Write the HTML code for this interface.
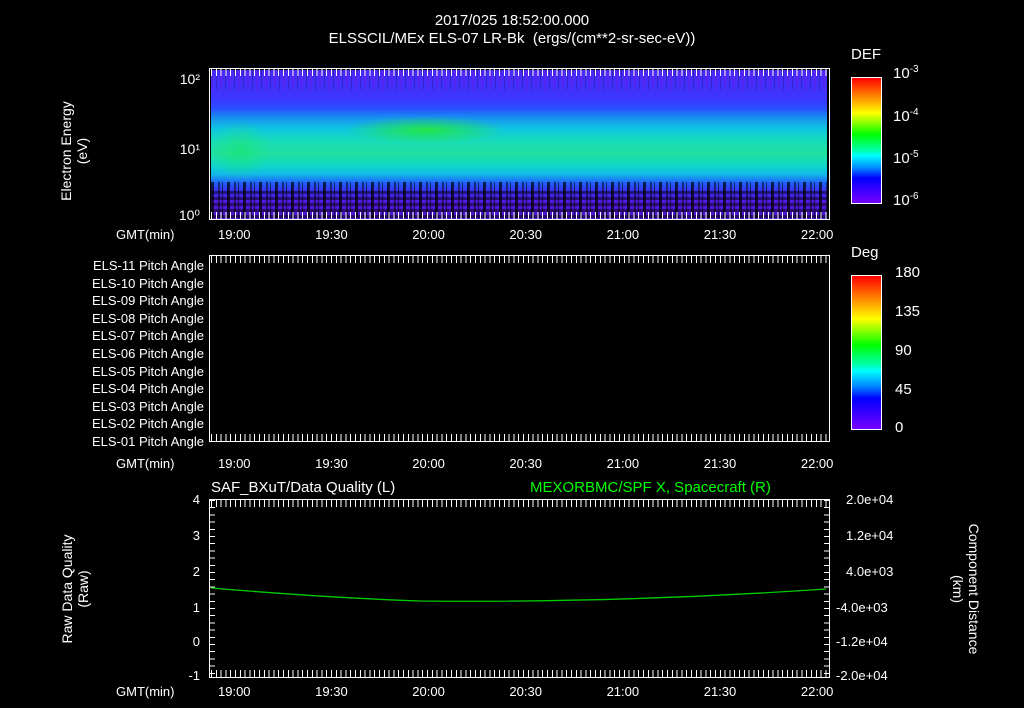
<!DOCTYPE html>
<html><head><meta charset="utf-8"><style>
body{margin:0;width:1024px;height:708px;background:#000;position:relative;overflow:hidden;font-family:"Liberation Sans",sans-serif;color:#fff;font-size:13px}
.a{position:absolute;white-space:nowrap}
.box{position:absolute;border:1px solid #fff;box-sizing:border-box}
.tk{position:absolute;height:7px;background:repeating-linear-gradient(90deg,#fff 0 1px,transparent 1px 4.8px)}
.vt{position:absolute;width:5px;background:repeating-linear-gradient(180deg,#fff 0 1px,transparent 1px 7.2px)}
.r{text-align:right}
.rot{transform:rotate(-90deg);transform-origin:center;text-align:center;line-height:16px}
</style></head><body>
<div class="a" style="left:0;width:1024px;top:12px;text-align:center;font-size:15px;line-height:18px">2017/025 18:52:00.000<br>ELSSCIL/MEx ELS-07 LR-Bk&nbsp; (ergs/(cm**2-sr-sec-eV))</div>

<!-- panel 1 -->
<div class="a" style="left:211px;top:70px;width:616px;height:149px;background:
radial-gradient(ellipse 80px 14px at 215px 60px,rgba(40,240,20,.75),transparent),
radial-gradient(ellipse 30px 30px at 30px 80px,rgba(30,230,90,.5),transparent),
linear-gradient(180deg,#4a28f8 0,#3a38ff 20%,#2850ff 26%,#1890f0 32%,#10c8e0 40%,#18dcb8 48%,#20e0a0 56%,#10d8c8 64%,#12b8e8 70%,#2060f8 76%,#3a30f0 81%,#5018e0 88%,#4a14c8 100%)"></div>
<div class="a" style="left:211px;top:182px;width:616px;height:36px;background:repeating-linear-gradient(90deg,rgba(0,0,0,.7) 0 3px,transparent 3px 7px,rgba(0,0,0,.5) 7px 9px,transparent 9px 11px,rgba(0,0,0,.6) 11px 12px,transparent 12px 16px);"></div>
<div class="a" style="left:211px;top:190px;width:616px;height:28px;background:repeating-linear-gradient(0deg,rgba(0,0,0,.45) 0 3px,transparent 3px 6px);"></div>
<div class="a" style="left:211px;top:70px;width:616px;height:20px;background:repeating-linear-gradient(90deg,rgba(120,20,220,.35) 0 2px,transparent 2px 5px,rgba(0,0,0,.2) 5px 6px,transparent 6px 9px)"></div>
<div class="box" style="left:209px;top:68px;width:621px;height:152px"></div>
<div class="tk" style="left:211px;top:69px;width:617px"></div>
<div class="tk" style="left:211px;top:212px;width:617px"></div>
<div class="a r" style="left:155px;width:45px;top:71px;font-size:14px">10²</div>
<div class="a r" style="left:155px;width:45px;top:141px;font-size:14px">10¹</div>
<div class="a r" style="left:155px;width:45px;top:207px;font-size:14px">10⁰</div>
<div class="a rot" style="left:10px;top:134px;width:130px;height:34px;font-size:14px">Electron Energy<br>(eV)</div>

<!-- colorbars -->
<div class="a" style="left:851px;top:46px;font-size:15px">DEF</div>
<div class="a" style="left:851px;top:77px;width:31px;height:127px;border:1px solid #fff;box-sizing:border-box;background:linear-gradient(180deg,#f00,#f80 15%,#ff0 28%,#8f0 36%,#0f0 45%,#0fa 58%,#0ff 62%,#08f 72%,#00f 80%,#70f 100%)"></div>
<div class="a" style="left:893px;top:64px;font-size:15px">10<sup style="font-size:10px">-3</sup></div>
<div class="a" style="left:893px;top:107px;font-size:15px">10<sup style="font-size:10px">-4</sup></div>
<div class="a" style="left:893px;top:149px;font-size:15px">10<sup style="font-size:10px">-5</sup></div>
<div class="a" style="left:893px;top:191px;font-size:15px">10<sup style="font-size:10px">-6</sup></div>
<div class="a" style="left:851px;top:244px;font-size:15px">Deg</div>
<div class="a" style="left:851px;top:275px;width:31px;height:155px;border:1px solid #fff;box-sizing:border-box;background:linear-gradient(180deg,#f00,#f80 15%,#ff0 28%,#8f0 36%,#0f0 45%,#0fa 58%,#0ff 62%,#08f 72%,#00f 80%,#70f 100%)"></div>
<div class="a" style="left:895px;top:264px;font-size:15px">180</div>
<div class="a" style="left:895px;top:303px;font-size:15px">135</div>
<div class="a" style="left:895px;top:342px;font-size:15px">90</div>
<div class="a" style="left:895px;top:381px;font-size:15px">45</div>
<div class="a" style="left:895px;top:419px;font-size:15px">0</div>

<!-- time labels -->
<div class="a" style="left:116px;top:227px">GMT(min)</div>
<div class="a" style="left:116px;top:456px">GMT(min)</div>
<div class="a" style="left:116px;top:684px">GMT(min)</div>
<div class="a" style="left:218px;top:227px;width:640px;word-spacing:61px">19:00 19:30 20:00 20:30 21:00 21:30 22:00</div>
<div class="a" style="left:218px;top:456px;width:640px;word-spacing:61px">19:00 19:30 20:00 20:30 21:00 21:30 22:00</div>
<div class="a" style="left:218px;top:684px;width:640px;word-spacing:61px">19:00 19:30 20:00 20:30 21:00 21:30 22:00</div>

<!-- panel 2 -->
<div class="box" style="left:209px;top:255px;width:621px;height:187px"></div>
<div class="tk" style="left:211px;top:256px;width:617px"></div>
<div class="tk" style="left:211px;top:434px;width:617px"></div>
<div class="a r" style="left:40px;width:164px;top:257px;line-height:17.6px">ELS-11 Pitch Angle<br>ELS-10 Pitch Angle<br>ELS-09 Pitch Angle<br>ELS-08 Pitch Angle<br>ELS-07 Pitch Angle<br>ELS-06 Pitch Angle<br>ELS-05 Pitch Angle<br>ELS-04 Pitch Angle<br>ELS-03 Pitch Angle<br>ELS-02 Pitch Angle<br>ELS-01 Pitch Angle</div>

<!-- panel 3 -->
<div class="a" style="left:211px;top:479px;font-size:15px">SAF_BXuT/Data Quality (L)</div>
<div class="a" style="left:530px;top:479px;font-size:15px;color:#0f0">MEXORBMC/SPF X, Spacecraft (R)</div>
<div class="box" style="left:209px;top:499px;width:621px;height:179px"></div>
<div class="tk" style="left:211px;top:500px;width:617px"></div>
<div class="tk" style="left:211px;top:670px;width:617px"></div>
<div class="vt" style="left:210px;top:500px;height:176px"></div>
<div class="vt" style="left:824px;top:500px;height:176px"></div>
<svg class="a" style="left:0;top:0" width="1024" height="708"><path d="M211 588 Q330 598 420 601 Q620 603 826 589" stroke="#0c0" stroke-width="1.3" fill="none"/></svg>
<div class="a r" style="left:170px;width:30px;top:492px">4</div>
<div class="a r" style="left:170px;width:30px;top:528px">3</div>
<div class="a r" style="left:170px;width:30px;top:564px">2</div>
<div class="a r" style="left:170px;width:30px;top:600px">1</div>
<div class="a r" style="left:170px;width:30px;top:634px">0</div>
<div class="a r" style="left:170px;width:30px;top:668px">-1</div>
<div class="a" style="left:846px;top:492px">2.0e+04</div>
<div class="a" style="left:846px;top:528px">1.2e+04</div>
<div class="a" style="left:846px;top:564px">4.0e+03</div>
<div class="a" style="left:836px;top:600px">-4.0e+03</div>
<div class="a" style="left:836px;top:634px">-1.2e+04</div>
<div class="a" style="left:836px;top:668px">-2.0e+04</div>
<div class="a rot" style="left:6px;top:572px;width:140px;height:34px;font-size:14px">Raw Data Quality<br>(Raw)</div>
<div class="a" style="left:880px;top:572px;width:170px;height:34px;font-size:14px;transform:rotate(90deg);text-align:center;line-height:16px">Component Distance<br>(km)</div>
</body></html>
